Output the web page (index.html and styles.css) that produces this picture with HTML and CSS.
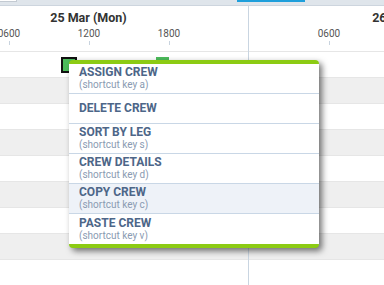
FILE: index.html
```html
<!DOCTYPE html>
<html>
<head>
<meta charset="utf-8">
<link rel="stylesheet" href="styles.css">
</head>
<body>
<div class="page">
  <div class="toolbar">
    <div class="tb-input"></div>
    <div class="tb-tab"></div>
  </div>
  <div class="timeline">
    <div class="day">
      <div class="day-head">
        <div class="day-title">25 Mar (Mon)</div>
        <div class="hours">
          <div class="hour"><span>0600</span><i></i></div>
          <div class="hour"><span>1200</span><i></i></div>
          <div class="hour"><span>1800</span><i></i></div>
        </div>
      </div>
      <div class="day-body">
        <div class="row">
          <div class="block selected"></div>
          <div class="block second"></div>
        </div>
        <div class="row alt"></div>
        <div class="row"></div>
        <div class="row alt"></div>
        <div class="row"></div>
        <div class="row alt"></div>
        <div class="row"></div>
        <div class="row alt"></div>
        <div class="row"></div>
        <div class="row alt"></div>
      </div>
    </div>
    <div class="day">
      <div class="day-head">
        <div class="day-title">26 Mar (Tue)</div>
        <div class="hours">
          <div class="hour"><span>0600</span><i></i></div>
          <div class="hour"><span>1200</span><i></i></div>
          <div class="hour"><span>1800</span><i></i></div>
        </div>
      </div>
      <div class="day-body">
        <div class="row"></div>
        <div class="row alt"></div>
        <div class="row"></div>
        <div class="row alt"></div>
        <div class="row"></div>
        <div class="row alt"></div>
        <div class="row"></div>
        <div class="row alt"></div>
        <div class="row"></div>
        <div class="row alt"></div>
      </div>
    </div>
  </div>

  <div class="menu">
    <div class="item">
      <div class="label">ASSIGN CREW</div>
      <div class="hint">(shortcut key a)</div>
    </div>
    <div class="item">
      <div class="label">DELETE CREW</div>
    </div>
    <div class="item">
      <div class="label">SORT BY LEG</div>
      <div class="hint">(shortcut key s)</div>
    </div>
    <div class="item">
      <div class="label">CREW DETAILS</div>
      <div class="hint">(shortcut key d)</div>
    </div>
    <div class="item hover">
      <div class="label">COPY CREW</div>
      <div class="hint">(shortcut key c)</div>
    </div>
    <div class="item">
      <div class="label">PASTE CREW</div>
      <div class="hint">(shortcut key v)</div>
    </div>
  </div>
</div>
</body>
</html>
```

FILE: styles.css
```css
html, body {
  margin: 0;
  padding: 0;
  background: #ffffff;
}

.page {
  position: relative;
  width: 384px;
  height: 285px;
  overflow: hidden;
  font-family: Roboto, "Liberation Sans", sans-serif;
}

.toolbar {
  height: 5px;
  background: #dfe5eb;
  border-bottom: 1px solid #cdd5de;
  display: flex;
  align-items: flex-start;
}

.tb-input {
  width: 16px;
  height: 1px;
  background: #ffffff;
  border: 1px solid #c3cad2;
  border-top: none;
  margin-left: -1px;
}

.tb-tab {
  width: 68px;
  height: 2px;
  background: #1e9fdb;
  margin-left: 220px;
}

.timeline {
  display: flex;
  margin-left: -71px;
}

.day {
  flex: 0 0 320px;
  width: 320px;
  box-sizing: border-box;
  border-right: 1px solid #c9d5e1;
}

.day-head {
  height: 45px;
  padding-top: 4px;
  box-sizing: border-box;
}

.day-title {
  font-size: 12.5px;
  line-height: 15px;
  font-weight: 700;
  color: #333333;
  text-align: center;
  white-space: nowrap;
}

.hours {
  display: grid;
  grid-template-columns: 40px 80px 80px 80px;
  margin-top: 3px;
}

.hour {
  display: flex;
  flex-direction: column;
  align-items: center;
}

.hour:first-child {
  grid-column: 2;
}

.hour span {
  font-size: 10px;
  line-height: 12px;
  color: #555555;
}

.hour i {
  display: block;
  width: 1px;
  height: 4px;
  margin-top: 1px;
  background: #c8d3de;
}

.day-body {
  display: flex;
  flex-direction: column;
}

.row {
  height: 26px;
  box-sizing: border-box;
  border-top: 1px solid #e6e6e6;
  background: #ffffff;
  display: flex;
  align-items: flex-start;
}

.row.alt {
  background: #efefef;
}

.block {
  background: #4cbc5b;
  margin-top: 5px;
}

.block.selected {
  width: 12px;
  height: 12px;
  border: 2px solid #111111;
  margin-left: 132px;
}

.block.second {
  width: 13px;
  height: 14px;
  margin-left: 79px;
}

.menu {
  position: absolute;
  left: 69px;
  top: 60px;
  width: 250px;
  background: #ffffff;
  border-top: 4px solid #8ccb13;
  border-bottom: 4px solid #8ccb13;
  border-radius: 4px;
  box-shadow: 3px 3px 6px rgba(0, 0, 0, 0.55);
  display: flex;
  flex-direction: column;
}

.item {
  height: 30px;
  box-sizing: border-box;
  border-bottom: 1px solid #c9d7e6;
  padding-left: 10px;
  display: flex;
  flex-direction: column;
  justify-content: center;
}

.item:last-child {
  border-bottom: none;
}

.item.hover {
  background: #eef2f8;
}

.label {
  font-size: 12px;
  line-height: 13px;
  font-weight: 700;
  color: #4d6688;
  white-space: nowrap;
}

.hint {
  font-size: 10px;
  line-height: 12px;
  color: #8a9bb2;
  white-space: nowrap;
}
```
